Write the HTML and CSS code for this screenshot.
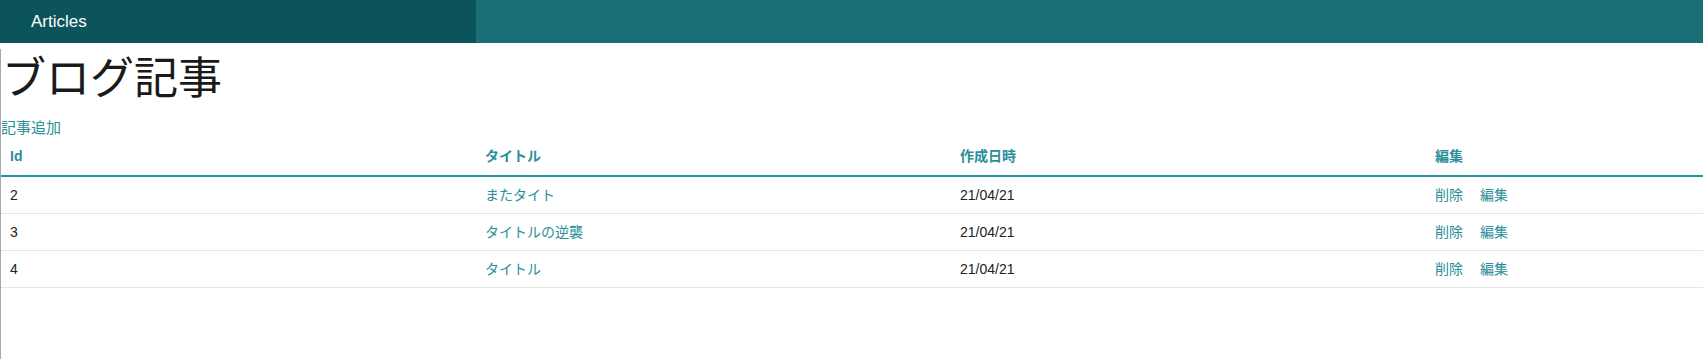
FILE: index.html
```html
<!DOCTYPE html>
<html lang="ja">
<head>
    <meta charset="UTF-8">
    <meta name="viewport" content="width=device-width, initial-scale=1.0">
    <title>ブログ記事</title>
    <link rel="stylesheet" href="styles.css">
</head>
<body>
    <nav class="top-bar">
        <div class="top-bar-title">Articles</div>
        <div class="top-bar-rest"></div>
    </nav>

    <div class="content">
        <h1>ブログ記事</h1>
        <a href="#" class="add-link">記事追加</a>

        <table class="articles">
            <colgroup>
                <col class="col-quarter">
                <col class="col-quarter">
                <col class="col-quarter">
                <col>
            </colgroup>
            <thead>
                <tr>
                    <th>Id</th>
                    <th>タイトル</th>
                    <th>作成日時</th>
                    <th>編集</th>
                </tr>
            </thead>
            <tbody>
                <tr>
                    <td>2</td>
                    <td><a href="#">またタイト</a></td>
                    <td>21/04/21</td>
                    <td class="actions"><a href="#">削除</a><a href="#">編集</a></td>
                </tr>
                <tr>
                    <td>3</td>
                    <td><a href="#">タイトルの逆襲</a></td>
                    <td>21/04/21</td>
                    <td class="actions"><a href="#">削除</a><a href="#">編集</a></td>
                </tr>
                <tr>
                    <td>4</td>
                    <td><a href="#">タイトル</a></td>
                    <td>21/04/21</td>
                    <td class="actions"><a href="#">削除</a><a href="#">編集</a></td>
                </tr>
            </tbody>
        </table>
    </div>
</body>
</html>
```

FILE: styles.css
```css
body {
    margin: 0;
    font-family: "Liberation Sans", "Noto Sans CJK JP", sans-serif;
    color: #222;
    background-color: #fff;
}
a {
    color: #2a8f99;
    text-decoration: none;
}
.top-bar {
    display: flex;
    height: 43px;
}
.top-bar-title {
    width: 476px;
    background-color: #0b545b;
    color: #fff;
    font-size: 17px;
    line-height: 43px;
    padding-left: 31px;
    box-sizing: border-box;
}
.top-bar-rest {
    flex: 1;
    background-color: #1b6e75;
}
.content {
    border-left: 1px solid #a8a8a8;
    min-height: calc(100vh - 43px);
}
h1 {
    margin: 6px 0 16px 1px;
    font-family: "Noto Sans CJK JP", sans-serif;
    font-size: 44px;
    font-weight: normal;
    line-height: 52px;
    color: #1a1a1a;
}
.add-link {
    display: block;
    font-size: 15px;
    line-height: 20px;
    font-family: "Noto Sans CJK JP", sans-serif;
}
.articles {
    width: 100%;
    border-collapse: collapse;
    table-layout: fixed;
    font-size: 14px;
}
.col-quarter {
    width: 475px;
}
.articles th {
    text-align: left;
    color: #2a8f99;
    font-weight: bold;
    line-height: 20px;
    padding: 9px 9px;
    border-bottom: 2px solid #2196a1;
}
.articles td {
    line-height: 20px;
    padding: 8px 9px;
    border-bottom: 1px solid #e6e6e6;
}
.actions a + a {
    margin-left: 17px;
}
```
